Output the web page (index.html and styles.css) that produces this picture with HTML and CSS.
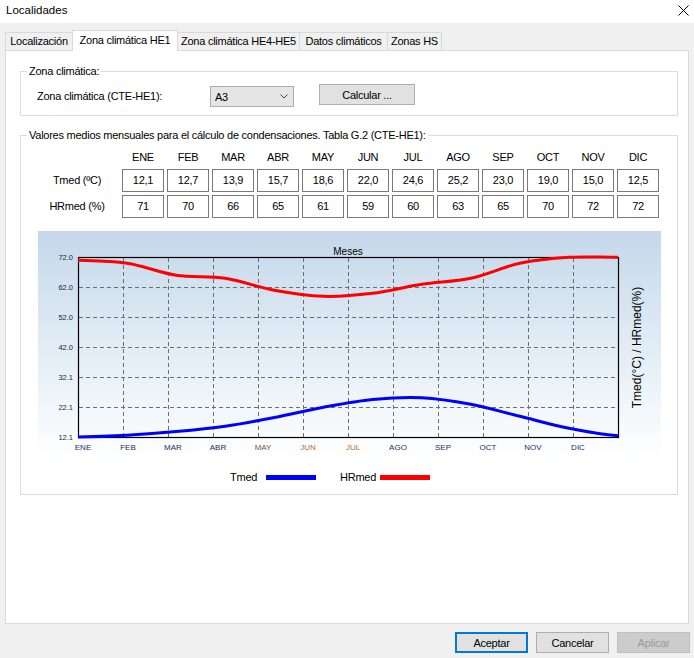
FILE: index.html
```html
<!DOCTYPE html>
<html lang="es">
<head>
<meta charset="utf-8">
<title>Localidades</title>
<link rel="stylesheet" href="styles.css">
</head>
<body>
<div class="window">
  <header class="titlebar">
    <span class="title">Localidades</span>
    <svg class="close" width="11" height="11" viewBox="0 0 11 11"><path d="M0.5 0.5L10.5 10.5M10.5 0.5L0.5 10.5"/></svg>
  </header>

  <nav class="tabs">
    <div class="tab tab-loc">Localización</div>
    <div class="tab tab-he1 tab-active">Zona climática HE1</div>
    <div class="tab tab-he4">Zona climática HE4-HE5</div>
    <div class="tab tab-datos">Datos climáticos</div>
    <div class="tab tab-hs">Zonas HS</div>
  </nav>

  <main class="panel">
    <fieldset class="group group-zone">
      <legend>Zona climática:</legend>
      <div class="zone-row">
        <span class="zone-label">Zona climática (CTE-HE1):</span>
        <div class="combo">
          <span>A3</span>
          <svg class="chevron" width="8" height="5" viewBox="0 0 8 5"><polyline points="0.5,0.5 4,4 7.5,0.5"/></svg>
        </div>
        <button class="btn btn-calc">Calcular ...</button>
      </div>
    </fieldset>

    <fieldset class="group group-values">
      <legend>Valores medios mensuales para el cálculo de condensaciones. Tabla G.2 (CTE-HE1):</legend>
      <div class="table">
        <span></span>
        <span class="mh">ENE</span><span class="mh">FEB</span><span class="mh">MAR</span><span class="mh">ABR</span>
        <span class="mh">MAY</span><span class="mh">JUN</span><span class="mh">JUL</span><span class="mh">AGO</span>
        <span class="mh">SEP</span><span class="mh">OCT</span><span class="mh">NOV</span><span class="mh">DIC</span>

        <span class="rl">Tmed (ºC)</span>
        <span class="cell">12,1</span><span class="cell">12,7</span><span class="cell">13,9</span><span class="cell">15,7</span>
        <span class="cell">18,6</span><span class="cell">22,0</span><span class="cell">24,6</span><span class="cell">25,2</span>
        <span class="cell">23,0</span><span class="cell">19,0</span><span class="cell">15,0</span><span class="cell">12,5</span>

        <span class="rl">HRmed (%)</span>
        <span class="cell">71</span><span class="cell">70</span><span class="cell">66</span><span class="cell">65</span>
        <span class="cell">61</span><span class="cell">59</span><span class="cell">60</span><span class="cell">63</span>
        <span class="cell">65</span><span class="cell">70</span><span class="cell">72</span><span class="cell">72</span>
      </div>

      <div class="chart">
        <svg class="chart-svg" width="623" height="228" viewBox="38 231 623 228">
          <path class="grid" d="M123.5 258V437M168.5 258V437M213.5 258V437M258.5 258V437M303.5 258V437M348.5 258V437M393.5 258V437M438.5 258V437M483.5 258V437M528.5 258V437M573.5 258V437M79 287.5H618M79 317.5H618M79 347.5H618M79 377.5H618M79 407.5H618"/>
          <rect class="frame" x="78.5" y="257.5" width="540" height="180"/>
          <path class="line-hr" d="M78,260.3 C94.36,260.8 110.73,260.8 127.09,263.3 C143.45,265.8 159.82,272.8 176.18,275.3 C192.54,277.8 208.91,275.8 225.27,278.3 C241.63,280.8 258,287.3 274.36,290.3 C290.72,293.3 307.09,295.8 323.45,296.3 C339.81,296.8 356.19,295.3 372.55,293.3 C388.91,291.3 405.28,286.8 421.64,284.3 C438,281.8 454.37,281.8 470.73,278.3 C487.09,274.8 503.46,266.8 519.82,263.3 C536.18,259.8 552.55,258.3 568.91,257.3 C585.27,256.3 601.64,257.3 618,257.3"/>
          <path class="line-t" d="M78,437 C94.36,436.7 110.73,436.1 127.09,435.2 C143.45,434.3 159.82,433.1 176.18,431.6 C192.54,430.1 208.91,428.55 225.27,426.2 C241.63,423.85 258,420.65 274.36,417.5 C290.72,414.35 307.09,410.3 323.45,407.3 C339.81,404.3 356.19,401.1 372.55,399.5 C388.91,397.9 405.28,396.9 421.64,397.7 C438,398.5 454.37,401.2 470.73,404.3 C487.09,407.4 503.46,412.3 519.82,416.3 C536.18,420.3 552.55,425.05 568.91,428.3 C585.27,431.55 601.64,434.55 618,435.8"/>
          <text class="title-x" x="348" y="251">Meses</text>
          <text class="ylab" x="73" y="257.5">72.0</text>
          <text class="ylab" x="73" y="287.5">62.0</text>
          <text class="ylab" x="73" y="317.5">52.0</text>
          <text class="ylab" x="73" y="347.5">42.0</text>
          <text class="ylab" x="73" y="377.5">32.1</text>
          <text class="ylab" x="73" y="407.5">22.1</text>
          <text class="ylab" x="73" y="437.5">12.1</text>
          <text class="xlab" x="83" y="447.5">ENE</text>
          <text class="xlab" x="128" y="447.5">FEB</text>
          <text class="xlab" x="173" y="447.5">MAR</text>
          <text class="xlab" x="218" y="447.5">ABR</text>
          <text class="xlab xlab-mid" x="263" y="447.5">MAY</text>
          <text class="xlab xlab-warm" x="308" y="447.5">JUN</text>
          <text class="xlab xlab-warm" x="353" y="447.5">JUL</text>
          <text class="xlab" x="398" y="447.5">AGO</text>
          <text class="xlab" x="443" y="447.5">SEP</text>
          <text class="xlab" x="488" y="447.5">OCT</text>
          <text class="xlab" x="533" y="447.5">NOV</text>
          <text class="xlab" x="578" y="447.5">DIC</text>
          <text class="title-y" x="637" y="347.5" transform="rotate(-90 637 347.5)">Tmed(°C) / HRmed(%)</text>
        </svg>
      </div>

      <div class="legend">
        <span class="legend-label legend-label-t">Tmed</span><span class="legend-bar bar-t"></span>
        <span class="legend-label legend-label-hr">HRmed</span><span class="legend-bar bar-hr"></span>
      </div>
    </fieldset>
  </main>

  <footer class="buttons">
    <button class="btn btn-default">Aceptar</button>
    <button class="btn">Cancelar</button>
    <button class="btn btn-disabled" disabled>Aplicar</button>
  </footer>
</div>
</body>
</html>
```

FILE: styles.css
```css
* { box-sizing: border-box; }

html, body { margin: 0; padding: 0; }

body {
  width: 694px;
  height: 658px;
  overflow: hidden;
  background: #f0f0f0;
  font-family: "Liberation Sans", Arial, sans-serif;
  font-size: 11px;
  color: #000;
}

.window {
  letter-spacing: -0.25px;
}

/* title bar */
.titlebar {
  height: 23px;
  background: #fff;
  display: flex;
  align-items: center;
  justify-content: space-between;
  padding: 0 5px 3px 6px;
}
.title { font-size: 11.5px; letter-spacing: 0; }
.close path { stroke: #000; stroke-width: 1; fill: none; }

/* tabs */
.tabs {
  display: flex;
  align-items: flex-end;
  height: 20px;
  margin-top: 7px;
  padding-left: 5px;
}
.tab {
  height: 18px;
  line-height: 17px;
  text-align: center;
  white-space: nowrap;
  border: 1px solid #d9d9d9;
  border-bottom: 0;
  background: #f0f0f0;
  margin-left: -1px;
}
.tab-loc { width: 68px; margin-left: 0; }
.tab-he1 { width: 106px; }
.tab-he4 { width: 123px; }
.tab-datos { width: 89px; }
.tab-hs { width: 55px; }
.tab-active {
  height: 21px;
  line-height: 19px;
  margin-bottom: -1px;
  background: #fff;
  position: relative;
  z-index: 1;
}

/* panel */
.panel {
  display: block;
  margin-left: 5px;
  width: 684px;
  height: 574px;
  background: #fff;
  border: 1px solid #d9d9d9;
  padding: 0 10px 0 14px;
}

.group {
  margin: 0;
  padding: 0;
  border: 1px solid #dcdcdc;
  min-width: 0;
}
.group legend {
  padding: 0 2px;
  margin-left: 6px;
  line-height: 15px;
}
.group-zone { margin-top: 13px; }
.group-values { margin-top: 12px; padding-bottom: 9px; }

/* zone row */
.zone-row {
  display: flex;
  align-items: flex-start;
  padding: 5px 0 8px 16px;
}
.zone-label {
  width: 173px;
  margin-top: 2px;
  line-height: 21px;
}
.combo {
  width: 84px;
  height: 21px;
  margin-top: 2px;
  display: flex;
  align-items: center;
  justify-content: space-between;
  padding: 0 5px 0 4px;
  background: #e5e5e5;
  border: 1px solid #acacac;
}
.chevron polyline { fill: none; stroke: #444; stroke-width: 1; }

.btn {
  height: 21px;
  width: 73px;
  padding: 0;
  border: 1px solid #adadad;
  background: #e1e1e1;
  color: #000;
  font: inherit;
  letter-spacing: inherit;
}
.btn-calc { width: 96px; margin-left: 25px; }
.btn-default { border: 2px solid #0078d7; }
.btn-disabled { background: #cccccc; border-color: #bfbfbf; color: #9a9a9a; }

/* values table */
.table {
  display: grid;
  grid-template-columns: 84px repeat(12, 42px);
  grid-template-rows: 16px 23px 23px;
  column-gap: 3px;
  row-gap: 3px;
  padding: 7px 0 0 14px;
}
.mh {
  text-align: center;
  line-height: 14px;
  align-self: start;
}
.rl {
  text-align: center;
  line-height: 23px;
}
.cell {
  border: 1px solid #7a7a7a;
  text-align: center;
  line-height: 21px;
}

/* chart */
.chart {
  margin: 13px 0 0 17px;
  width: 623px;
  height: 228px;
  background: linear-gradient(#c4d8ea 0%, #e4eef6 55%, #ffffff 100%);
}
.chart-svg { display: block; letter-spacing: 0; }
.grid { stroke: #6e6e6e; stroke-width: 1; stroke-dasharray: 4 3; fill: none; shape-rendering: crispEdges; }
.frame { fill: none; stroke: #000; stroke-width: 1.2; }
.line-hr { fill: none; stroke: #ff0000; stroke-width: 3; stroke-linejoin: round; }
.line-t { fill: none; stroke: #0000ff; stroke-width: 3; stroke-linejoin: round; }
.chart-svg text { font-family: "Liberation Sans", Arial, sans-serif; dominant-baseline: central; }
.title-x { font-size: 10px; text-anchor: middle; fill: #000; }
.ylab { font-size: 7.5px; text-anchor: end; fill: #1c2442; }
.xlab { font-size: 8px; text-anchor: middle; fill: #22305e; }
.xlab-mid { fill: #7a5535; }
.xlab-warm { fill: #c0681c; }
.title-y { font-size: 12px; text-anchor: middle; fill: #000; }

/* legend */
.legend {
  display: flex;
  align-items: center;
  height: 16px;
  margin-top: 10px;
  padding-left: 209px;
}
.legend-label { line-height: 16px; }
.legend-label-t { width: 36px; }
.legend-label-hr { width: 40px; margin-left: 24px; }
.legend-bar { width: 50px; height: 5px; }
.bar-t { background: #0000ff; }
.bar-hr { background: #ff0000; }

/* bottom buttons */
.buttons {
  display: flex;
  justify-content: flex-end;
  gap: 8px;
  padding-right: 4px;
  margin-top: 8px;
}
```
